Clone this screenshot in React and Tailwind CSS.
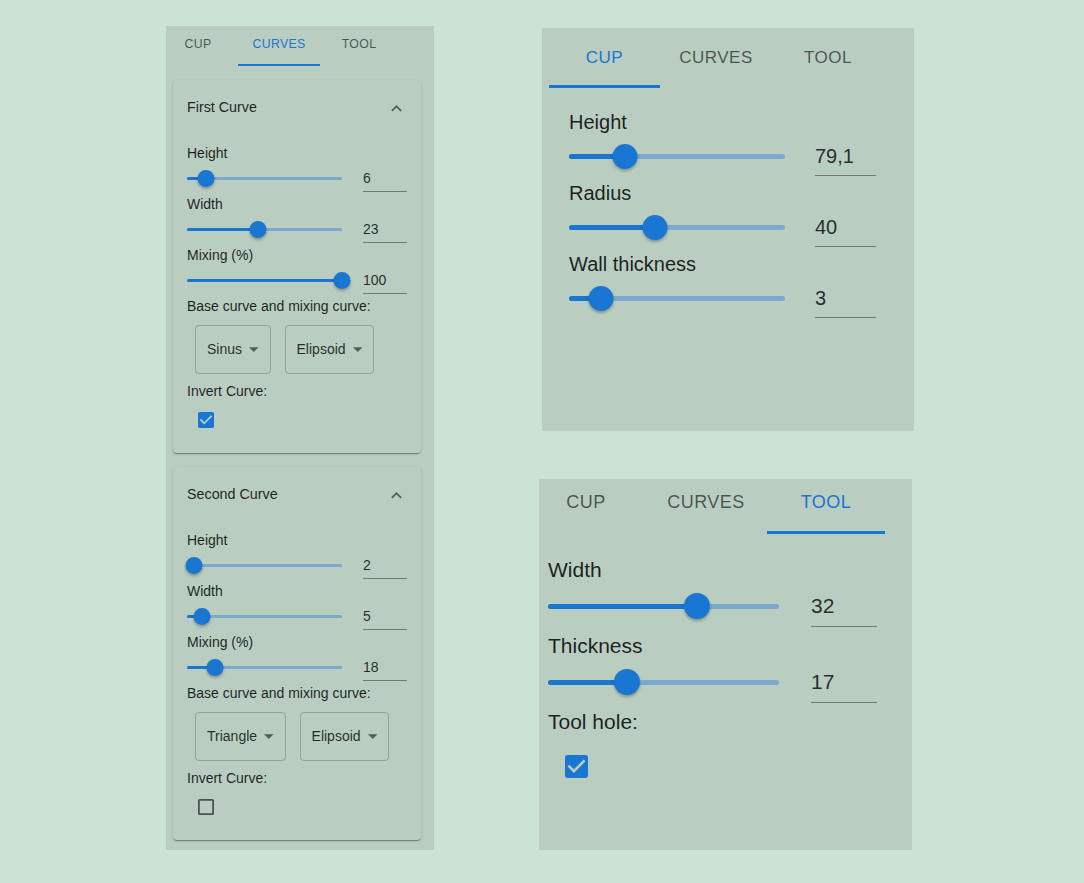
import React from 'react';

// slider with rail, filled track and thumb; thumb position comes from the value
function Slider({ widthCls, railCls, thumbCls, pct }) {
  return (
    <div className={`relative flex items-center ${widthCls} ${thumbCls}`}>
      <div className={`absolute inset-x-0 rounded-full bg-[#7ba9cc] ${railCls}`} />
      <div className={`absolute left-0 rounded-full bg-[#1976d2] ${railCls}`} style={{ width: `${pct}%` }} />
      <div
        className={`absolute -translate-x-1/2 rounded-full bg-[#1976d2] shadow-[0_2px_3px_rgba(0,0,0,0.28)] ${thumbCls}`}
        style={{ left: `${pct}%` }}
      />
    </div>
  );
}

function Check({ checked, sizeCls }) {
  return (
    <svg viewBox="3 3 18 18" className={sizeCls}>
      {checked ? (
        <path
          fill="#1976d2"
          d="M19 3H5c-1.11 0-2 .9-2 2v14c0 1.1.89 2 2 2h14c1.11 0 2-.9 2-2V5c0-1.1-.89-2-2-2zm-9 14l-5-5 1.41-1.41L10 14.17l7.59-7.59L19 8l-9 9z"
        />
      ) : (
        <path
          fill="rgba(0,0,0,0.6)"
          d="M19 5v14H5V5h14m0-2H5c-1.1 0-2 .9-2 2v14c0 1.1.9 2 2 2h14c1.1 0 2-.9 2-2V5c0-1.1-.9-2-2-2z"
        />
      )}
    </svg>
  );
}

function Tab({ label, active, widthCls, textCls, barCls }) {
  return (
    <div className={`flex flex-col ${widthCls}`}>
      <div className={`flex flex-1 items-center justify-center ${textCls} ${active ? 'text-[#1976d2]' : 'text-black/60'}`}>
        {label}
      </div>
      <div className={`${barCls} ${active ? 'bg-[#1976d2]' : ''}`} />
    </div>
  );
}

function SelectBox({ text }) {
  return (
    <div className="flex h-[49px] items-center gap-[7px] rounded-[4px] border border-black/20 px-[11px] text-[14px] text-black/80">
      <span>{text}</span>
      <svg viewBox="7 10 10 5" className="h-[5px] w-[9.5px]">
        <path d="M7 10l5 5 5-5z" fill="rgba(0,0,0,0.55)" />
      </svg>
    </div>
  );
}

function SmallRow({ label, value, pct }) {
  return (
    <>
      <div className="flex h-[20px] items-center text-[14px] text-black/85">{label}</div>
      <div className="flex h-[31px] items-start">
        <div className="flex h-[31px] items-center">
          <Slider widthCls="w-[155px]" railCls="h-[3.5px]" thumbCls="h-[17px] w-[17px]" pct={pct} />
        </div>
        <div className="ml-[21px] mt-[2px] flex h-[27px] w-[44px] items-center border-b border-black/40 text-[14px] text-black/80">
          {value}
        </div>
      </div>
    </>
  );
}

function CurveCard({ title, rows, selects, checked }) {
  return (
    <div className="ml-[7px] mt-[14px] flex h-[373px] w-[248px] flex-col rounded-[4px] bg-[#b9cdc0] shadow-[0_2px_1px_-1px_rgba(0,0,0,0.2),0_1px_1px_0_rgba(0,0,0,0.14),0_1px_3px_0_rgba(0,0,0,0.12)]">
      <div className="flex h-[56px] items-center justify-between pl-[14px] pr-[14px]">
        <span className="text-[14.3px] text-black/85">{title}</span>
        <svg viewBox="0 0 24 24" className="h-[21px] w-[21px]">
          <path fill="rgba(0,0,0,0.55)" d="M12 8l-6 6 1.41 1.41L12 10.83l4.59 4.58L18 14z" />
        </svg>
      </div>
      <div className="flex flex-col px-[14px] pt-[7px]">
        {rows.map((r) => (
          <SmallRow key={r.label} {...r} />
        ))}
        <div className="flex h-[20px] items-center text-[14px] text-black/85">Base curve and mixing curve:</div>
        <div className="ml-[8px] mt-[9px] flex gap-[14px]">
          {selects.map((s) => (
            <SelectBox key={s} text={s} />
          ))}
        </div>
        <div className="mt-[7px] flex h-[20px] items-center text-[14px] text-black/85">Invert Curve:</div>
        <div className="flex h-[37px] w-[38px] items-center justify-center">
          <Check checked={checked} sizeCls="h-[16px] w-[16px]" />
        </div>
      </div>
    </div>
  );
}

function LeftPanel() {
  const tabText = "pb-[1px] text-[12.3px] uppercase tracking-[0.35px]";
  return (
    <div className="ml-[166px] mt-[26px] flex h-[824px] w-[268px] flex-col bg-[#b9cdc0]">
      <div className="flex h-[40px]">
        <Tab label="Cup" widthCls="w-[64px]" textCls={tabText} barCls="h-[2px]" />
        <Tab label="Curves" active widthCls="ml-[8px] w-[82px]" textCls={tabText} barCls="h-[2px]" />
        <Tab label="Tool" widthCls="w-[78px]" textCls={tabText} barCls="h-[2px]" />
      </div>
      <CurveCard
        title="First Curve"
        rows={[
          { label: 'Height', value: '6', pct: 12.3 },
          { label: 'Width', value: '23', pct: 45.8 },
          { label: 'Mixing (%)', value: '100', pct: 100 },
        ]}
        selects={['Sinus', 'Elipsoid']}
        checked
      />
      <CurveCard
        title="Second Curve"
        rows={[
          { label: 'Height', value: '2', pct: 4.3 },
          { label: 'Width', value: '5', pct: 9.9 },
          { label: 'Mixing (%)', value: '18', pct: 18 },
        ]}
        selects={['Triangle', 'Elipsoid']}
      />
    </div>
  );
}

function CupPanel() {
  const tabText = "pt-[2px] text-[17px] uppercase tracking-[0.48px]";
  const rows = [
    { label: 'Height', value: '79,1', pct: 26 },
    { label: 'Radius', value: '40', pct: 39.8 },
    { label: 'Wall thickness', value: '3', pct: 14.8 },
  ];
  return (
    <div className="ml-[3px] mt-[28px] flex h-[403px] w-[372px] flex-col bg-[#b9cdc0]">
      <div className="flex h-[60px] pl-[7px]">
        <Tab label="Cup" active widthCls="w-[111px]" textCls={tabText} barCls="h-[3px]" />
        <Tab label="Curves" widthCls="w-[112px]" textCls={tabText} barCls="h-[3px]" />
        <Tab label="Tool" widthCls="w-[112px]" textCls={tabText} barCls="h-[3px]" />
      </div>
      <div className="flex flex-col pl-[27px] pt-[19px]">
        {rows.map((r) => (
          <div key={r.label} className="flex h-[71px] flex-col">
            <div className="flex h-[30px] items-center text-[20px] text-black/85">{r.label}</div>
            <div className="flex items-start">
              <div className="flex h-[38px] items-center">
                <Slider widthCls="w-[216px]" railCls="h-[5px]" thumbCls="h-[25px] w-[25px]" pct={r.pct} />
              </div>
              <div className="ml-[30px] flex h-[39px] w-[61px] items-center border-b border-black/40 text-[20px] text-black/80">
                {r.value}
              </div>
            </div>
          </div>
        ))}
      </div>
    </div>
  );
}

function ToolPanel() {
  const tabText = "pb-[5px] text-[18px] uppercase tracking-[0.5px]";
  const rows = [
    { label: 'Width', value: '32', pct: 64.4 },
    { label: 'Thickness', value: '17', pct: 34.2 },
  ];
  return (
    <div className="mt-[48px] flex h-[371px] w-[373px] flex-col bg-[#b9cdc0]">
      <div className="flex h-[55px]">
        <Tab label="Cup" widthCls="w-[94px]" textCls={tabText} barCls="h-[3px]" />
        <Tab label="Curves" widthCls="ml-[14px] w-[118px]" textCls={tabText} barCls="h-[3px]" />
        <Tab label="Tool" active widthCls="ml-[2px] w-[118px]" textCls={tabText} barCls="h-[3px]" />
      </div>
      <div className="flex flex-col pl-[9px] pt-[20px]">
        {rows.map((r) => (
          <div key={r.label} className="flex h-[76px] flex-col">
            <div className="flex h-[32px] items-center text-[21px] text-black/85">{r.label}</div>
            <div className="flex items-start">
              <div className="flex h-[40px] items-center">
                <Slider widthCls="w-[231px]" railCls="h-[5px]" thumbCls="h-[26px] w-[26px]" pct={r.pct} />
              </div>
              <div className="ml-[32px] flex h-[41px] w-[66px] items-center border-b border-black/40 text-[21px] text-black/80">
                {r.value}
              </div>
            </div>
          </div>
        ))}
        <div className="flex h-[32px] items-center text-[21px] text-black/85">Tool hole:</div>
        <div className="flex h-[56px] w-[56px] items-center justify-center">
          <Check checked sizeCls="h-[23px] w-[23px]" />
        </div>
      </div>
    </div>
  );
}

export default function App() {
  return (
    <div className="flex h-[883px] w-[1084px] items-start bg-[#cbe3d4] font-['Liberation_Sans',Arial,sans-serif]">
      <LeftPanel />
      <div className="ml-[105px] flex flex-col">
        <CupPanel />
        <ToolPanel />
      </div>
    </div>
  );
}
